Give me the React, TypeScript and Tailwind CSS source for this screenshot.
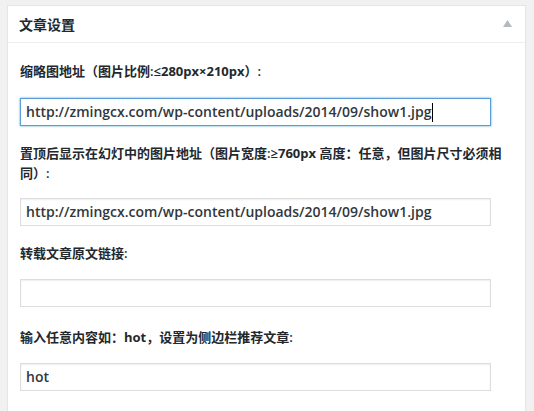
import React from "react";

const font = { fontFamily: '"Open Sans", "Noto Sans CJK SC", sans-serif' };

function Field({ value, focused }: { value: string; focused?: boolean }) {
  return (
    <div
      className={
        "h-[28px] w-[471px] flex items-center pl-[5px] pr-[6px] bg-white text-[14px] text-[#32373c] leading-none whitespace-nowrap " +
        (focused
          ? "border border-[#5b9dd9] shadow-[0_0_2px_rgba(30,140,190,0.8)]"
          : "border border-[#ddd] shadow-[inset_0_1px_2px_rgba(0,0,0,0.07)]")
      }
    >
      <span>{value}</span>
      {focused && <span className="inline-block w-px h-[19px] bg-black ml-[1px]" />}
    </div>
  );
}

export default function App() {
  const url = "http://zmingcx.com/wp-content/uploads/2014/09/show1.jpg";
  return (
    <div className="w-[534px] h-[411px] bg-[#f1f1f1] pt-[5px] pl-[7px] overflow-hidden" style={font}>
      <div className="w-[519px] h-[420px] bg-white border border-[#e5e5e5] shadow-[0_1px_1px_rgba(0,0,0,0.04)]">
        <div className="h-[37px] flex items-center justify-between pl-[11px] pr-[12px] border-b border-[#eee]">
          <span className="text-[14px] font-bold text-[#23282d]">文章设置</span>
          <svg width="9" height="7" viewBox="0 0 9 7" className="mr-[1px] mb-[2px]">
            <polygon points="4.5,0 9,7 0,7" fill="#b4b9be" />
          </svg>
        </div>
        <div className="px-[12px] pt-[18px] text-[13px] leading-[20px] font-semibold text-[#23282d]">
          <div>缩略图地址（图片比例:≤<b className="font-bold">280px×210px</b>）:</div>
          <div className="mt-[17px]">
            <Field value={url} focused />
          </div>
          <div className="mt-[17px] whitespace-nowrap">
            置顶后显示在幻灯中的图片地址（图片宽度:≥<b className="font-bold">760px</b> 高度：任意，但图片尺寸必须相
            <br />
            同）:
          </div>
          <div className="mt-[15px]">
            <Field value={url} />
          </div>
          <div className="mt-[17px]">转载文章原文链接:</div>
          <div className="mt-[16px]">
            <Field value="" />
          </div>
          <div className="mt-[20px]">
            输入任意内容如：<b className="font-bold">hot</b>，设置为侧边栏推荐文章:
          </div>
          <div className="mt-[16px]">
            <Field value="hot" />
          </div>
        </div>
      </div>
    </div>
  );
}
